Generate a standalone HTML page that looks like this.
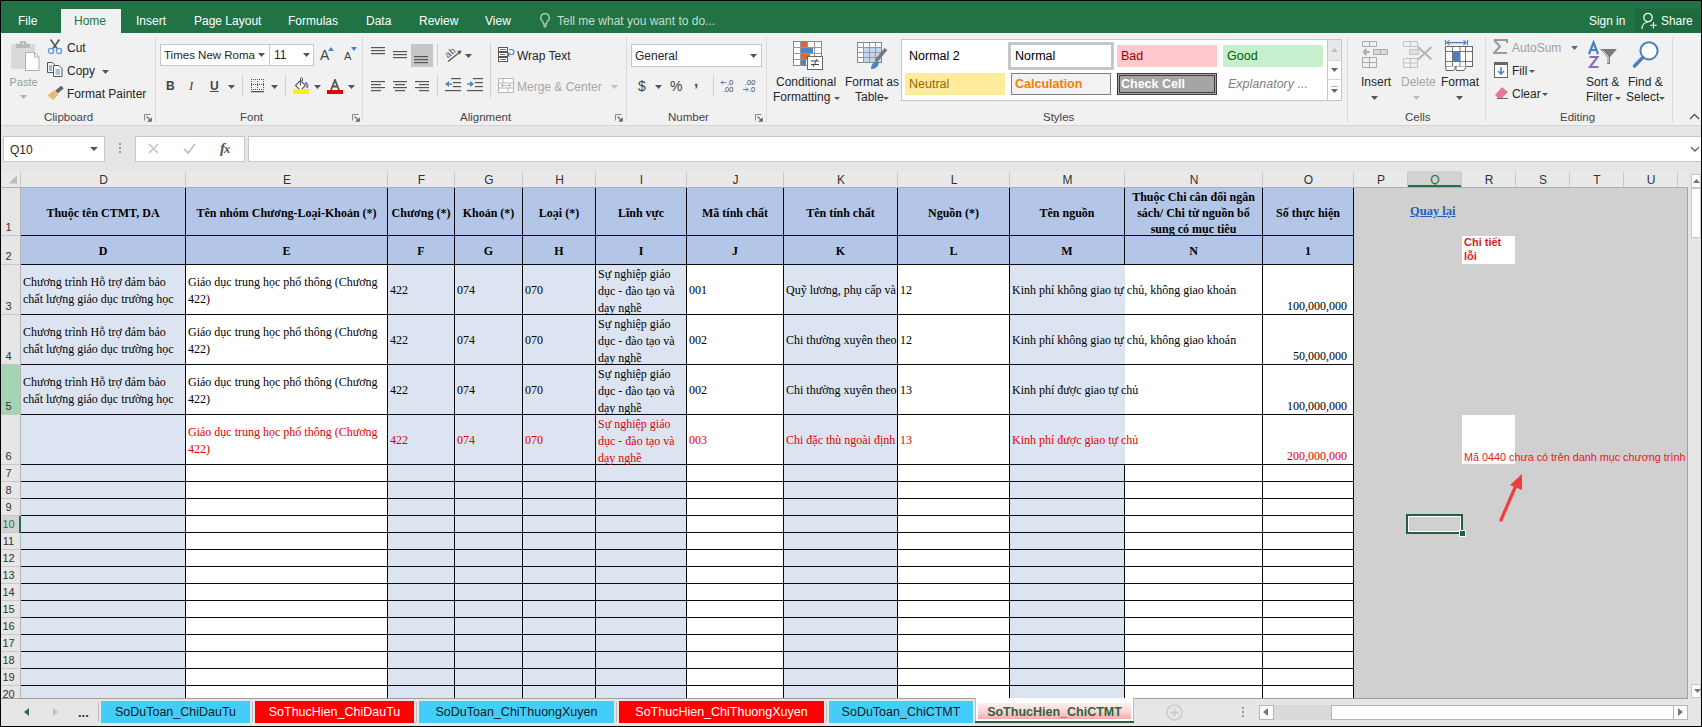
<!DOCTYPE html>
<html><head><meta charset="utf-8"><style>
html,body{margin:0;padding:0;width:1702px;height:727px;overflow:hidden;background:#000}
body{position:relative;font-family:'Liberation Sans', sans-serif}
div{position:absolute}
.t{white-space:nowrap}
</style></head><body>
<div style="left:0px;top:0px;width:1702px;height:727px;background:#000"></div>
<div style="left:1px;top:1px;width:1700px;height:32px;background:#217346"></div>
<div style="left:61px;top:9px;width:60px;height:25px;background:#f1f1f1"></div>
<div class="t" style="left:18px;top:14px;font-size:12px;color:#fff;line-height:15px">File</div>
<div class="t" style="left:74px;top:14px;font-size:12px;color:#217346;line-height:15px">Home</div>
<div class="t" style="left:136px;top:14px;font-size:12px;color:#fff;line-height:15px">Insert</div>
<div class="t" style="left:194px;top:14px;font-size:12px;color:#fff;line-height:15px">Page Layout</div>
<div class="t" style="left:288px;top:14px;font-size:12px;color:#fff;line-height:15px">Formulas</div>
<div class="t" style="left:366px;top:14px;font-size:12px;color:#fff;line-height:15px">Data</div>
<div class="t" style="left:419px;top:14px;font-size:12px;color:#fff;line-height:15px">Review</div>
<div class="t" style="left:485px;top:14px;font-size:12px;color:#fff;line-height:15px">View</div>
<svg style="position:absolute;left:539px;top:12px;" width="12" height="16" viewBox="0 0 12 16"><path d="M6 1.5a4.3 4.3 0 0 0-2.6 7.7c.6.5.9 1.2.9 2V12h3.4v-.8c0-.8.3-1.5.9-2A4.3 4.3 0 0 0 6 1.5z" fill="none" stroke="#c8dccf" stroke-width="1.1"/><path d="M4.3 13.5h3.4M4.8 15h2.4" stroke="#c8dccf" stroke-width="1.1"/></svg>
<div class="t" style="left:557px;top:14px;font-size:12px;color:#c8dccf;line-height:15px">Tell me what you want to do...</div>
<div class="t" style="left:1589px;top:13.5px;font-size:11.9px;color:#fff;line-height:15px">Sign in</div>
<div style="left:1635px;top:9px;width:66px;height:24px;background:#1e6b3f"></div>
<svg style="position:absolute;left:1641px;top:12px;" width="16" height="18" viewBox="0 0 16 18"><circle cx="7" cy="5.5" r="4.2" fill="none" stroke="#fff" stroke-width="1.2"/><path d="M1 17c0-4 2.5-6.5 5.5-6.5" fill="none" stroke="#fff" stroke-width="1.2"/><path d="M12.5 10v6.5M9.2 13.2h6.5" stroke="#fff" stroke-width="1.1"/></svg>
<div class="t" style="left:1661px;top:13.5px;font-size:11.9px;color:#fff;line-height:15px">Share</div>
<div style="left:1px;top:33px;width:1700px;height:92px;background:#f1f1f1"></div>
<div style="left:1px;top:125px;width:1700px;height:1px;background:#d5d5d5"></div>
<div style="left:155px;top:37px;width:1px;height:85px;background:#dadada"></div>
<div style="left:362px;top:37px;width:1px;height:85px;background:#dadada"></div>
<div style="left:626px;top:37px;width:1px;height:85px;background:#dadada"></div>
<div style="left:766px;top:37px;width:1px;height:85px;background:#dadada"></div>
<div style="left:1347px;top:37px;width:1px;height:85px;background:#dadada"></div>
<div style="left:1485px;top:37px;width:1px;height:85px;background:#dadada"></div>
<div style="left:1672px;top:37px;width:1px;height:85px;background:#dadada"></div>
<div class="t" style="left:44px;top:110px;font-size:11.5px;color:#444;line-height:14px">Clipboard</div>
<div class="t" style="left:240px;top:110px;font-size:11.5px;color:#444;line-height:14px">Font</div>
<div class="t" style="left:460px;top:110px;font-size:11.5px;color:#444;line-height:14px">Alignment</div>
<div class="t" style="left:668px;top:110px;font-size:11.5px;color:#444;line-height:14px">Number</div>
<div class="t" style="left:1043px;top:110px;font-size:11.5px;color:#444;line-height:14px">Styles</div>
<div class="t" style="left:1405px;top:110px;font-size:11.5px;color:#444;line-height:14px">Cells</div>
<div class="t" style="left:1560px;top:110px;font-size:11.5px;color:#444;line-height:14px">Editing</div>
<svg style="position:absolute;left:144px;top:114px;" width="8" height="8" viewBox="0 0 8 8"><path d="M0.5 6.5V0.5H6.5" stroke="#888" fill="none"/><path d="M2.5 2.5l3.5 3.5" stroke="#666" stroke-width="1.1"/><path d="M7.8 3.2v4.6H3.2z" fill="#666"/></svg>
<svg style="position:absolute;left:352px;top:114px;" width="8" height="8" viewBox="0 0 8 8"><path d="M0.5 6.5V0.5H6.5" stroke="#888" fill="none"/><path d="M2.5 2.5l3.5 3.5" stroke="#666" stroke-width="1.1"/><path d="M7.8 3.2v4.6H3.2z" fill="#666"/></svg>
<svg style="position:absolute;left:615px;top:114px;" width="8" height="8" viewBox="0 0 8 8"><path d="M0.5 6.5V0.5H6.5" stroke="#888" fill="none"/><path d="M2.5 2.5l3.5 3.5" stroke="#666" stroke-width="1.1"/><path d="M7.8 3.2v4.6H3.2z" fill="#666"/></svg>
<svg style="position:absolute;left:755px;top:114px;" width="8" height="8" viewBox="0 0 8 8"><path d="M0.5 6.5V0.5H6.5" stroke="#888" fill="none"/><path d="M2.5 2.5l3.5 3.5" stroke="#666" stroke-width="1.1"/><path d="M7.8 3.2v4.6H3.2z" fill="#666"/></svg>
<svg style="position:absolute;left:1689px;top:113px;" width="11" height="7" viewBox="0 0 11 7"><path d="M1 6l4.5-4.5L10 6" stroke="#555" stroke-width="1.4" fill="none"/></svg>
<svg style="position:absolute;left:10px;top:40px;" width="31" height="32" viewBox="0 0 31 32"><rect x="1.2" y="4.2" width="24" height="24.5" fill="#d9d9d9"/><rect x="6" y="3.7" width="14" height="4.3" fill="#b9b9b9"/><rect x="10" y="1" width="6.4" height="3.5" rx="1" fill="#b9b9b9"/><circle cx="13.2" cy="3.6" r="1" fill="#f1f1f1"/><path d="M15.5 12.5h9l4.5 4.5v13.5h-13.5z" fill="#fff" stroke="#b0b0b0"/><path d="M24.5 12.5v4.5h4.5" fill="none" stroke="#b0b0b0"/></svg>
<div class="t" style="left:9.5px;top:75px;font-size:11px;color:#9a9a9a;line-height:14px">Paste</div>
<svg style="position:absolute;left:20px;top:95px;" width="7" height="4" viewBox="0 0 7 4"><path d="M0 0h7L3.5 4z" fill="#b0b0b0"/></svg>
<svg style="position:absolute;left:47px;top:39px;" width="16" height="16" viewBox="0 0 16 16"><path d="M3.5 0.5L10 9.5M12.5 0.5L6 9.5" stroke="#555" stroke-width="1.6"/><circle cx="4" cy="12" r="2.6" fill="none" stroke="#5b9bd5" stroke-width="1.3"/><circle cx="12" cy="12" r="2.6" fill="none" stroke="#5b9bd5" stroke-width="1.3"/></svg>
<div class="t" style="left:67px;top:41px;font-size:12px;color:#262626;line-height:14px">Cut</div>
<svg style="position:absolute;left:47px;top:62px;" width="16" height="15" viewBox="0 0 16 15"><path d="M0.5 0.5h5l2 2v8h-7z" fill="#f1f1f1" stroke="#555"/><path d="M2 4h3M2 6h3M2 8h3" stroke="#4a86c5"/><path d="M6.5 3.5h5.5l3 3v8h-8.5z" fill="#fff" stroke="#555"/><path d="M8.5 8h4.5M8.5 10h4.5M8.5 12h4.5" stroke="#4a86c5"/></svg>
<div class="t" style="left:67px;top:64px;font-size:12px;color:#262626;line-height:14px">Copy</div>
<svg style="position:absolute;left:102px;top:70px;" width="7" height="4" viewBox="0 0 7 4"><path d="M0 0h7L3.5 4z" fill="#555"/></svg>
<svg style="position:absolute;left:47px;top:86px;" width="17" height="14" viewBox="0 0 17 14"><path d="M9.5 6L15.5 1" stroke="#666" stroke-width="3.6"/><path d="M0.5 9.5L7 4l4.5 4.5L6 14z" fill="#e4bd73"/></svg>
<div class="t" style="left:67px;top:87px;font-size:12px;color:#262626;line-height:14px">Format Painter</div>
<div style="left:160px;top:44px;width:110px;height:22px;background:#fff;border:1px solid #c6c6c6;box-sizing:border-box"></div>
<div style="left:269px;top:44px;width:45px;height:22px;background:#fff;border:1px solid #c6c6c6;box-sizing:border-box"></div>
<div class="t" style="left:164px;top:48px;font-size:11.5px;color:#262626;line-height:14px">Times New Roma</div>
<svg style="position:absolute;left:258px;top:53px;" width="7" height="4" viewBox="0 0 7 4"><path d="M0 0h7L3.5 4z" fill="#555"/></svg>
<div class="t" style="left:274px;top:48px;font-size:12px;color:#262626;line-height:14px">11</div>
<svg style="position:absolute;left:303px;top:53px;" width="7" height="4" viewBox="0 0 7 4"><path d="M0 0h7L3.5 4z" fill="#555"/></svg>
<div class="t" style="left:320px;top:47px;font-size:14px;color:#444;line-height:16px">A</div>
<svg style="position:absolute;left:328px;top:47px;" width="6" height="4" viewBox="0 0 6 4"><path d="M0 4h6L3 0z" fill="#4a86c5"/></svg>
<div class="t" style="left:344px;top:50px;font-size:11px;color:#444;line-height:13px">A</div>
<svg style="position:absolute;left:351px;top:47px;" width="6" height="4" viewBox="0 0 6 4"><path d="M0 0h6L3 4z" fill="#4a86c5"/></svg>
<div class="t" style="left:166px;top:79px;font-size:12px;font-weight:bold;color:#444;line-height:14px">B</div>
<div class="t" style="left:189px;top:79px;font-size:13px;font-style:italic;font-family:'Liberation Serif', serif;color:#444;line-height:14px">I</div>
<div class="t" style="left:210px;top:79px;font-size:12px;font-weight:bold;color:#444;line-height:14px;text-decoration:underline">U</div>
<svg style="position:absolute;left:228px;top:85px;" width="7" height="4" viewBox="0 0 7 4"><path d="M0 0h7L3.5 4z" fill="#555"/></svg>
<svg style="position:absolute;left:271px;top:85px;" width="7" height="4" viewBox="0 0 7 4"><path d="M0 0h7L3.5 4z" fill="#555"/></svg>
<svg style="position:absolute;left:314px;top:85px;" width="7" height="4" viewBox="0 0 7 4"><path d="M0 0h7L3.5 4z" fill="#555"/></svg>
<svg style="position:absolute;left:348px;top:85px;" width="7" height="4" viewBox="0 0 7 4"><path d="M0 0h7L3.5 4z" fill="#555"/></svg>
<div style="left:242px;top:75px;width:1px;height:21px;background:#d0d0d0"></div>
<div style="left:285px;top:75px;width:1px;height:21px;background:#d0d0d0"></div>
<svg style="position:absolute;left:250px;top:78px;" width="16" height="15" viewBox="0 0 16 15"><g fill="#555"><rect x="1" y="1" width="1" height="1"/><rect x="1" y="3" width="1" height="1"/><rect x="1" y="5" width="1" height="1"/><rect x="1" y="7" width="1" height="1"/><rect x="1" y="9" width="1" height="1"/><rect x="1" y="11" width="1" height="1"/><rect x="3" y="1" width="1" height="1"/><rect x="3" y="11" width="1" height="1"/><rect x="5" y="1" width="1" height="1"/><rect x="5" y="11" width="1" height="1"/><rect x="7" y="1" width="1" height="1"/><rect x="7" y="3" width="1" height="1"/><rect x="7" y="5" width="1" height="1"/><rect x="7" y="7" width="1" height="1"/><rect x="7" y="9" width="1" height="1"/><rect x="7" y="11" width="1" height="1"/><rect x="9" y="1" width="1" height="1"/><rect x="9" y="11" width="1" height="1"/><rect x="11" y="1" width="1" height="1"/><rect x="11" y="11" width="1" height="1"/><rect x="13" y="1" width="1" height="1"/><rect x="13" y="3" width="1" height="1"/><rect x="13" y="5" width="1" height="1"/><rect x="13" y="7" width="1" height="1"/><rect x="13" y="9" width="1" height="1"/><rect x="13" y="11" width="1" height="1"/><rect x="1" y="6" width="1" height="1"/><rect x="3" y="6" width="1" height="1"/><rect x="5" y="6" width="1" height="1"/><rect x="7" y="6" width="1" height="1"/><rect x="9" y="6" width="1" height="1"/><rect x="11" y="6" width="1" height="1"/><rect x="13" y="6" width="1" height="1"/></g><rect x="1" y="13" width="13" height="1.3" fill="#555"/></svg>
<svg style="position:absolute;left:292px;top:77px;" width="18" height="18" viewBox="0 0 18 18"><path d="M3.5 8.5l5-5 5 5-5 5z" fill="#fff" stroke="#555" stroke-width="1.1"/><path d="M8.5 8.5V1.5c0-1 2-1 2 0v2.5" fill="none" stroke="#555"/><path d="M13 6c2.5 0 3 2.5 2 5" stroke="#4a86c5" stroke-width="1.8" fill="none"/><rect x="1" y="12" width="16" height="5" fill="#f5f500"/></svg>
<svg style="position:absolute;left:326px;top:79px;" width="18" height="16" viewBox="0 0 18 16"><path d="M5 11L9 1l4 10M6.5 7.5h5" stroke="#555" stroke-width="1.8" fill="none"/><rect x="1" y="11" width="16" height="4" fill="#e00000"/></svg>
<div style="left:411px;top:44px;width:22px;height:23px;background:#c6c6c6"></div>
<svg style="position:absolute;left:371px;top:47px;" width="14" height="10" viewBox="0 0 14 10"><rect x="0" y="0" width="14" height="1.2" fill="#555"/><rect x="0" y="3" width="14" height="1.2" fill="#555"/><rect x="0" y="6" width="14" height="1.2" fill="#555"/></svg>
<svg style="position:absolute;left:393px;top:51px;" width="14" height="10" viewBox="0 0 14 10"><rect x="0" y="0" width="14" height="1.2" fill="#555"/><rect x="0" y="3" width="14" height="1.2" fill="#555"/><rect x="0" y="6" width="14" height="1.2" fill="#555"/></svg>
<svg style="position:absolute;left:414px;top:56px;" width="14" height="10" viewBox="0 0 14 10"><rect x="0" y="0" width="14" height="1.2" fill="#555"/><rect x="0" y="3" width="14" height="1.2" fill="#555"/><rect x="0" y="6" width="14" height="1.2" fill="#555"/></svg>
<svg style="position:absolute;left:371px;top:81px;" width="14" height="13" viewBox="0 0 14 13"><rect x="0" y="0" width="14" height="1.2" fill="#555"/><rect x="0" y="3" width="10" height="1.2" fill="#555"/><rect x="0" y="6" width="14" height="1.2" fill="#555"/><rect x="0" y="9" width="10" height="1.2" fill="#555"/></svg>
<svg style="position:absolute;left:393px;top:81px;" width="14" height="13" viewBox="0 0 14 13"><rect x="0" y="0" width="14" height="1.2" fill="#555"/><rect x="2" y="3" width="10" height="1.2" fill="#555"/><rect x="0" y="6" width="14" height="1.2" fill="#555"/><rect x="2" y="9" width="10" height="1.2" fill="#555"/></svg>
<svg style="position:absolute;left:415px;top:81px;" width="14" height="13" viewBox="0 0 14 13"><rect x="0" y="0" width="14" height="1.2" fill="#555"/><rect x="4" y="3" width="10" height="1.2" fill="#555"/><rect x="0" y="6" width="14" height="1.2" fill="#555"/><rect x="4" y="9" width="10" height="1.2" fill="#555"/></svg>
<div style="left:437px;top:44px;width:1px;height:21px;background:#d0d0d0"></div>
<div style="left:437px;top:75px;width:1px;height:21px;background:#d0d0d0"></div>
<svg style="position:absolute;left:444px;top:46px;" width="19" height="17" viewBox="0 0 19 17"><text x="1" y="10" font-size="9.5" font-family="Liberation Sans" fill="#555" transform="rotate(-40 6 7)">ab</text><path d="M4 15.5L16 6" stroke="#555" stroke-width="1.3"/><path d="M17.5 4.5l-4.5 0.5 3 3.5z" fill="#555"/></svg>
<svg style="position:absolute;left:465px;top:54px;" width="7" height="4" viewBox="0 0 7 4"><path d="M0 0h7L3.5 4z" fill="#555"/></svg>
<svg style="position:absolute;left:445px;top:78px;" width="17" height="14" viewBox="0 0 17 14"><rect x="6" y="0" width="10" height="1.2" fill="#555"/><rect x="8" y="4" width="8" height="1.2" fill="#555"/><rect x="8" y="8" width="8" height="1.2" fill="#555"/><rect x="0" y="12" width="16" height="1.2" fill="#555"/><path d="M0 6l4-3v6z" fill="#4a86c5"/><rect x="3" y="5.4" width="4" height="1.4" fill="#4a86c5"/></svg>
<svg style="position:absolute;left:467px;top:78px;" width="17" height="14" viewBox="0 0 17 14"><rect x="6" y="0" width="10" height="1.2" fill="#555"/><rect x="8" y="4" width="8" height="1.2" fill="#555"/><rect x="8" y="8" width="8" height="1.2" fill="#555"/><rect x="0" y="12" width="16" height="1.2" fill="#555"/><path d="M7 6l-4-3v6z" fill="#4a86c5"/><rect x="0" y="5.4" width="4" height="1.4" fill="#4a86c5"/></svg>
<div style="left:490px;top:43px;width:1px;height:55px;background:#d0d0d0"></div>
<svg style="position:absolute;left:498px;top:47px;" width="17" height="16" viewBox="0 0 17 16"><g fill="#fff" stroke="#555"><rect x="0.5" y="0.5" width="9" height="4"/><rect x="0.5" y="5.5" width="9" height="4"/><rect x="0.5" y="10.5" width="9" height="4"/></g><path d="M2 2.5h6M2 7.5h5M2 12.5h6" stroke="#777"/><path d="M11 2.5h2.5a2.5 2.5 0 0 1 0 5H10M11.5 5.5l-2 2 2 2" stroke="#4a86c5" stroke-width="1.2" fill="none"/></svg>
<div class="t" style="left:517px;top:49px;font-size:12px;color:#262626;line-height:14px">Wrap Text</div>
<svg style="position:absolute;left:498px;top:78px;" width="16" height="15" viewBox="0 0 16 15"><path d="M0.5 0.5h15v14h-15zM0.5 5h15M0.5 10h15M5 0v5M10 10v5" stroke="#b5b5b5" fill="#fff"/><path d="M3 7.5h10M3 7.5l2-1.5M3 7.5l2 1.5M13 7.5l-2-1.5M13 7.5l-2 1.5" stroke="#b5b5b5"/></svg>
<div class="t" style="left:517px;top:80px;font-size:12px;color:#a6a6a6;line-height:14px">Merge &amp; Center</div>
<svg style="position:absolute;left:611px;top:85px;" width="7" height="4" viewBox="0 0 7 4"><path d="M0 0h7L3.5 4z" fill="#c0c0c0"/></svg>
<div style="left:631px;top:44px;width:131px;height:23px;background:#fff;border:1px solid #c6c6c6;box-sizing:border-box"></div>
<div class="t" style="left:635px;top:49px;font-size:12px;color:#262626;line-height:14px">General</div>
<svg style="position:absolute;left:750px;top:54px;" width="7" height="4" viewBox="0 0 7 4"><path d="M0 0h7L3.5 4z" fill="#555"/></svg>
<div class="t" style="left:638px;top:78px;font-size:14px;color:#444;line-height:16px">$</div>
<svg style="position:absolute;left:655px;top:85px;" width="7" height="4" viewBox="0 0 7 4"><path d="M0 0h7L3.5 4z" fill="#555"/></svg>
<div class="t" style="left:670px;top:78px;font-size:14px;color:#444;line-height:16px">%</div>
<div class="t" style="left:694px;top:73px;font-size:15px;font-weight:bold;color:#444;line-height:16px">,</div>
<div style="left:713px;top:75px;width:1px;height:21px;background:#d0d0d0"></div>
<svg style="position:absolute;left:720px;top:79px;" width="16" height="14" viewBox="0 0 16 14"><text x="7" y="6" font-size="7.5" font-family="Liberation Sans" fill="#444">.0</text><text x="3" y="13" font-size="7.5" font-family="Liberation Sans" fill="#444">.00</text><path d="M1 3.5h5M1 3.5l2-2M1 3.5l2 2" stroke="#4a86c5" fill="none"/></svg>
<svg style="position:absolute;left:742px;top:79px;" width="16" height="14" viewBox="0 0 16 14"><text x="3" y="6" font-size="7.5" font-family="Liberation Sans" fill="#444">.00</text><text x="7" y="13" font-size="7.5" font-family="Liberation Sans" fill="#444">.0</text><path d="M1 10.5h5M6 10.5l-2-2M6 10.5l-2 2" stroke="#4a86c5" fill="none"/></svg>
<svg style="position:absolute;left:793px;top:41px;" width="31" height="30" viewBox="0 0 31 30"><g stroke="#888" fill="#fff"><rect x="0.5" y="0.5" width="28" height="24"/></g><path d="M0.5 6.5h28M0.5 12.5h28M0.5 18.5h28M7.5 0.5v24M14.5 0.5v24M21.5 0.5v24" stroke="#999"/><rect x="8" y="1" width="6" height="5" fill="#e0633a"/><rect x="8" y="7" width="12" height="5" fill="#4a86c5"/><rect x="8" y="13" width="9" height="5" fill="#e0633a"/><rect x="8" y="19" width="5" height="5" fill="#4a86c5"/><rect x="14.5" y="15.5" width="15" height="13" fill="#fff" stroke="#666"/><path d="M18 20h8M18 23.5h8M24 18l-4 8" stroke="#444"/></svg>
<div class="t" style="left:776px;top:75px;font-size:12px;color:#262626;line-height:14px">Conditional</div>
<div class="t" style="left:773px;top:90px;font-size:12px;color:#262626;line-height:14px">Formatting</div>
<svg style="position:absolute;left:834px;top:97px;" width="6" height="3" viewBox="0 0 6 3"><path d="M0 0h6L3 3z" fill="#555"/></svg>
<svg style="position:absolute;left:857px;top:42px;" width="31" height="29" viewBox="0 0 31 29"><rect x="0.5" y="0.5" width="24" height="20" fill="#fff" stroke="#888"/><rect x="6" y="6" width="18" height="14" fill="#c5d7ea"/><path d="M0.5 5.5h24M0.5 10.5h24M0.5 15.5h24M6.5 0.5v20M12.5 0.5v20M18.5 0.5v20" stroke="#999"/><path d="M29 7l-10 12" stroke="#777" stroke-width="3.5"/><path d="M14 27c0-4 2-7 6-8l2 2c-1 4-4 6-8 6z" fill="#4a86c5"/></svg>
<div class="t" style="left:845px;top:75px;font-size:12px;color:#262626;line-height:14px">Format as</div>
<div class="t" style="left:855px;top:90px;font-size:12px;color:#262626;line-height:14px">Table</div>
<svg style="position:absolute;left:883px;top:97px;" width="6" height="3" viewBox="0 0 6 3"><path d="M0 0h6L3 3z" fill="#555"/></svg>
<div style="left:901px;top:39px;width:427px;height:62px;background:#fff;border:1px solid #c6c6c6;box-sizing:border-box"></div>
<div class="t" style="left:909px;top:49px;font-size:12.5px;color:#000;line-height:14px">Normal 2</div>
<div style="left:1008px;top:42px;width:106px;height:28px;background:#fff;border:3px solid #c6c6c6;box-sizing:border-box"></div>
<div class="t" style="left:1015px;top:49px;font-size:12.5px;color:#000;line-height:14px">Normal</div>
<div style="left:1117px;top:45px;width:100px;height:22px;background:#ffc7ce"></div>
<div class="t" style="left:1121px;top:49px;font-size:12.5px;color:#9c0006;line-height:14px">Bad</div>
<div style="left:1223px;top:45px;width:100px;height:22px;background:#c6efce"></div>
<div class="t" style="left:1227px;top:49px;font-size:12.5px;color:#006100;line-height:14px">Good</div>
<div style="left:905px;top:73px;width:100px;height:22px;background:#ffeb9c"></div>
<div class="t" style="left:909px;top:77px;font-size:12.5px;color:#9c6500;line-height:14px">Neutral</div>
<div style="left:1011px;top:73px;width:100px;height:22px;background:#f2f2f2;border:1px solid #7f7f7f;box-sizing:border-box"></div>
<div class="t" style="left:1015px;top:77px;font-size:12.5px;color:#fa7d00;font-weight:bold;line-height:14px">Calculation</div>
<div style="left:1117px;top:73px;width:100px;height:22px;background:#a5a5a5;border:3px double #3f3f3f;box-sizing:border-box"></div>
<div class="t" style="left:1121px;top:77px;font-size:12.5px;color:#fff;font-weight:bold;line-height:14px">Check Cell</div>
<div class="t" style="left:1228px;top:77px;font-size:12.5px;color:#7f7f7f;font-style:italic;line-height:14px">Explanatory ...</div>
<div style="left:1327px;top:39px;width:15px;height:62px;background:#fff;border:1px solid #c6c6c6;box-sizing:border-box"></div>
<div style="left:1328px;top:40px;width:13px;height:20px;background:#e9e9e9"></div>
<div style="left:1327px;top:60px;width:15px;height:1px;background:#d6d6d6"></div>
<div style="left:1327px;top:79px;width:15px;height:1px;background:#d6d6d6"></div>
<svg style="position:absolute;left:1331px;top:48px;" width="7" height="4" viewBox="0 0 7 4"><path d="M0 4h7L3.5 0z" fill="#c0c0c0"/></svg>
<svg style="position:absolute;left:1331px;top:68px;" width="7" height="4" viewBox="0 0 7 4"><path d="M0 0h7L3.5 4z" fill="#666"/></svg>
<svg style="position:absolute;left:1331px;top:86px;" width="7" height="7" viewBox="0 0 7 7"><path d="M0 0h7" stroke="#666"/><path d="M0 3h7L3.5 7z" fill="#666"/></svg>
<svg style="position:absolute;left:1361px;top:40px;" width="28" height="29" viewBox="0 0 28 29"><g fill="none" stroke="#aaa"><path d="M1.5 1.5h14v5h-14zM8.5 1.5v5"/><path d="M1.5 17.5h14v10h-14zM1.5 22.5h14M8.5 17.5v10"/></g><path d="M12.5 9.5h14v5h-14zM19.5 9.5v5" fill="#dadada" stroke="#aaa"/><path d="M2.5 12h6M2.5 12l3-3M2.5 12l3 3" stroke="#aaa" stroke-width="1.8" fill="none"/></svg>
<div class="t" style="left:1361px;top:75px;font-size:12px;color:#262626;line-height:14px">Insert</div>
<svg style="position:absolute;left:1371px;top:96px;" width="7" height="4" viewBox="0 0 7 4"><path d="M0 0h7L3.5 4z" fill="#555"/></svg>
<svg style="position:absolute;left:1402px;top:40px;" width="31" height="29" viewBox="0 0 31 29"><g fill="none" stroke="#c2c2c2"><path d="M1.5 1.5h14v5h-14zM8.5 1.5v5"/><path d="M1.5 18.5h14v9h-14zM1.5 23h14M8.5 18.5v9"/></g><path d="M7.5 9.5h9v5h-9z" fill="#dedede" stroke="#c2c2c2"/><path d="M16 7L29.5 19.5M29.5 7L16 19.5" stroke="#b4b4b4" stroke-width="2"/></svg>
<div class="t" style="left:1401px;top:75px;font-size:12px;color:#a6a6a6;line-height:14px">Delete</div>
<svg style="position:absolute;left:1413px;top:96px;" width="7" height="4" viewBox="0 0 7 4"><path d="M0 0h7L3.5 4z" fill="#bbb"/></svg>
<svg style="position:absolute;left:1444px;top:40px;" width="30" height="32" viewBox="0 0 30 32"><path d="M1.5 0v5M23.5 0v5M2.5 2.6h20M2.5 2.6l3-2.2M2.5 2.6l3 2.2M22.5 2.6l-3-2.2M22.5 2.6l-3 2.2" stroke="#4a7fbf" stroke-width="1.1" fill="none"/><rect x="1.5" y="6.5" width="27" height="20" fill="#fff" stroke="#666"/><path d="M1.5 11.5h27M1.5 21.5h27M8.5 6.5v20M16 6.5v20M21.5 6.5v20" stroke="#777"/><rect x="9" y="12" width="7" height="9.5" fill="#4a7fbf"/><path d="M2 26.5v4h7.5l2.5-4M12 26.5v4h8l2.5-4" stroke="#666" fill="#fff"/></svg>
<div class="t" style="left:1441px;top:75px;font-size:12px;color:#262626;line-height:14px">Format</div>
<svg style="position:absolute;left:1456px;top:96px;" width="7" height="4" viewBox="0 0 7 4"><path d="M0 0h7L3.5 4z" fill="#555"/></svg>
<svg style="position:absolute;left:1493px;top:39px;" width="15" height="15" viewBox="0 0 15 15"><path d="M1 1h13v3M14 14H1l6-6.5L1 1" fill="none" stroke="#9a9a9a" stroke-width="2"/></svg>
<div class="t" style="left:1512px;top:41px;font-size:12px;color:#a0a0a0;line-height:14px">AutoSum</div>
<svg style="position:absolute;left:1571px;top:46px;" width="7" height="4" viewBox="0 0 7 4"><path d="M0 0h7L3.5 4z" fill="#666"/></svg>
<svg style="position:absolute;left:1494px;top:62px;" width="14" height="16" viewBox="0 0 14 16"><rect x="0.5" y="0.5" width="13" height="15" fill="#fff" stroke="#666"/><rect x="0" y="0" width="14" height="3" fill="#666"/><path d="M7 5v7M4 9l3 3 3-3" stroke="#4a86c5" stroke-width="1.6" fill="none"/></svg>
<div class="t" style="left:1512px;top:64px;font-size:12px;color:#262626;line-height:14px">Fill</div>
<svg style="position:absolute;left:1529px;top:70px;" width="6" height="3" viewBox="0 0 6 3"><path d="M0 0h6L3 3z" fill="#555"/></svg>
<svg style="position:absolute;left:1494px;top:86px;" width="15" height="13" viewBox="0 0 15 13"><path d="M1 9l7-8 6 5-6 6H4z" fill="#e8779a"/><path d="M3 12.5h11" stroke="#666"/></svg>
<div class="t" style="left:1512px;top:87px;font-size:12px;color:#262626;line-height:14px">Clear</div>
<svg style="position:absolute;left:1542px;top:93px;" width="6" height="3" viewBox="0 0 6 3"><path d="M0 0h6L3 3z" fill="#555"/></svg>
<svg style="position:absolute;left:1586px;top:40px;" width="34" height="30" viewBox="0 0 34 30"><path d="M3 14L7.5 2.5L12 14M4.8 10h5.4" stroke="#4a7fbf" stroke-width="2.2" fill="none"/><path d="M3.5 17h8L4 27h8.5" stroke="#8e6bb8" stroke-width="2.1" fill="none"/><path d="M14 9h17l-7 8v7h-3v-7z" fill="#7a7a7a"/><path d="M16.5 10.5l5.5 6v6.5" stroke="#fff" stroke-width="1" fill="none"/></svg>
<div class="t" style="left:1586px;top:75px;font-size:12px;color:#262626;line-height:14px">Sort &amp;</div>
<div class="t" style="left:1586px;top:90px;font-size:12px;color:#262626;line-height:14px">Filter</div>
<svg style="position:absolute;left:1615px;top:97px;" width="6" height="3" viewBox="0 0 6 3"><path d="M0 0h6L3 3z" fill="#555"/></svg>
<svg style="position:absolute;left:1630px;top:38px;" width="31" height="31" viewBox="0 0 31 31"><circle cx="19" cy="12.8" r="8.6" fill="#fff" stroke="#4a7fbf" stroke-width="2"/><path d="M12.8 19.5L4.5 28" stroke="#4a7fbf" stroke-width="3.4" stroke-linecap="round"/></svg>
<div class="t" style="left:1628px;top:75px;font-size:12px;color:#262626;line-height:14px">Find &amp;</div>
<div class="t" style="left:1626px;top:90px;font-size:12px;color:#262626;line-height:14px">Select</div>
<svg style="position:absolute;left:1659px;top:97px;" width="6" height="3" viewBox="0 0 6 3"><path d="M0 0h6L3 3z" fill="#555"/></svg>
<div style="left:1px;top:126px;width:1700px;height:45px;background:#e6e6e6"></div>
<div style="left:3px;top:136px;width:102px;height:26px;background:#fff;border:1px solid #c6c6c6;box-sizing:border-box"></div>
<div class="t" style="left:10px;top:143px;font-size:12px;color:#262626;line-height:14px">Q10</div>
<svg style="position:absolute;left:90px;top:147px;" width="8" height="4" viewBox="0 0 8 4"><path d="M0 0h8L4 4z" fill="#555"/></svg>
<div style="left:119px;top:143px;width:2px;height:2px;background:#9a9a9a"></div>
<div style="left:119px;top:147px;width:2px;height:2px;background:#9a9a9a"></div>
<div style="left:119px;top:151px;width:2px;height:2px;background:#9a9a9a"></div>
<div style="left:135px;top:136px;width:110px;height:26px;background:#fff;border:1px solid #c6c6c6;box-sizing:border-box"></div>
<svg style="position:absolute;left:148px;top:143px;" width="11" height="11" viewBox="0 0 11 11"><path d="M1 1l9 9M10 1L1 10" stroke="#c4c4c4" stroke-width="1.6"/></svg>
<svg style="position:absolute;left:183px;top:143px;" width="13" height="11" viewBox="0 0 13 11"><path d="M1 6l4 4 7-9" stroke="#c6c6c6" stroke-width="2" fill="none"/></svg>
<div class="t" style="left:220px;top:140px;font-family:'Liberation Serif', serif;font-size:15px;color:#555;line-height:16px;font-weight:bold"><i>f</i><i style='font-size:12.5px;margin-left:-1px'>x</i></div>
<div style="left:248px;top:136px;width:1453px;height:26px;background:#fff;border:1px solid #c6c6c6;border-right:none;box-sizing:border-box"></div>
<svg style="position:absolute;left:1690px;top:146px;" width="10" height="6" viewBox="0 0 10 6"><path d="M1 1l4 4 4-4" stroke="#666" stroke-width="1.4" fill="none"/></svg>
<div style="left:1px;top:171px;width:1700px;height:16px;background:#e9e9e9"></div>
<div style="left:1px;top:187px;width:20px;height:511px;background:#e6e6e6"></div>
<svg style="position:absolute;left:8px;top:175px;" width="10" height="9" viewBox="0 0 10 9"><path d="M9 0.5v8H0.5z" fill="#bdbdbd"/></svg>
<div style="left:1408px;top:171px;width:53px;height:16px;background:#d2d2d2"></div>
<div style="left:1408px;top:185px;width:53px;height:2px;background:#217346"></div>
<div style="left:185px;top:172px;width:1px;height:15px;background:#c8c8c8"></div>
<div class="t" style="left:20px;top:173px;width:167px;text-align:center;font-size:12px;line-height:15px;color:#333">D</div>
<div style="left:387px;top:172px;width:1px;height:15px;background:#c8c8c8"></div>
<div class="t" style="left:185px;top:173px;width:204px;text-align:center;font-size:12px;line-height:15px;color:#333">E</div>
<div style="left:454px;top:172px;width:1px;height:15px;background:#c8c8c8"></div>
<div class="t" style="left:387px;top:173px;width:69px;text-align:center;font-size:12px;line-height:15px;color:#333">F</div>
<div style="left:522px;top:172px;width:1px;height:15px;background:#c8c8c8"></div>
<div class="t" style="left:454px;top:173px;width:70px;text-align:center;font-size:12px;line-height:15px;color:#333">G</div>
<div style="left:595px;top:172px;width:1px;height:15px;background:#c8c8c8"></div>
<div class="t" style="left:522px;top:173px;width:75px;text-align:center;font-size:12px;line-height:15px;color:#333">H</div>
<div style="left:686px;top:172px;width:1px;height:15px;background:#c8c8c8"></div>
<div class="t" style="left:595px;top:173px;width:93px;text-align:center;font-size:12px;line-height:15px;color:#333">I</div>
<div style="left:783px;top:172px;width:1px;height:15px;background:#c8c8c8"></div>
<div class="t" style="left:686px;top:173px;width:99px;text-align:center;font-size:12px;line-height:15px;color:#333">J</div>
<div style="left:897px;top:172px;width:1px;height:15px;background:#c8c8c8"></div>
<div class="t" style="left:783px;top:173px;width:116px;text-align:center;font-size:12px;line-height:15px;color:#333">K</div>
<div style="left:1009px;top:172px;width:1px;height:15px;background:#c8c8c8"></div>
<div class="t" style="left:897px;top:173px;width:114px;text-align:center;font-size:12px;line-height:15px;color:#333">L</div>
<div style="left:1124px;top:172px;width:1px;height:15px;background:#c8c8c8"></div>
<div class="t" style="left:1009px;top:173px;width:117px;text-align:center;font-size:12px;line-height:15px;color:#333">M</div>
<div style="left:1262px;top:172px;width:1px;height:15px;background:#c8c8c8"></div>
<div class="t" style="left:1124px;top:173px;width:140px;text-align:center;font-size:12px;line-height:15px;color:#333">N</div>
<div style="left:1353px;top:172px;width:1px;height:15px;background:#c8c8c8"></div>
<div class="t" style="left:1262px;top:173px;width:93px;text-align:center;font-size:12px;line-height:15px;color:#333">O</div>
<div style="left:1407px;top:172px;width:1px;height:15px;background:#c8c8c8"></div>
<div class="t" style="left:1353px;top:173px;width:56px;text-align:center;font-size:12px;line-height:15px;color:#333">P</div>
<div style="left:1461px;top:172px;width:1px;height:15px;background:#c8c8c8"></div>
<div class="t" style="left:1407px;top:173px;width:56px;text-align:center;font-size:12px;line-height:15px;color:#217346">Q</div>
<div style="left:1515px;top:172px;width:1px;height:15px;background:#c8c8c8"></div>
<div class="t" style="left:1461px;top:173px;width:56px;text-align:center;font-size:12px;line-height:15px;color:#333">R</div>
<div style="left:1569px;top:172px;width:1px;height:15px;background:#c8c8c8"></div>
<div class="t" style="left:1515px;top:173px;width:56px;text-align:center;font-size:12px;line-height:15px;color:#333">S</div>
<div style="left:1623px;top:172px;width:1px;height:15px;background:#c8c8c8"></div>
<div class="t" style="left:1569px;top:173px;width:56px;text-align:center;font-size:12px;line-height:15px;color:#333">T</div>
<div style="left:1677px;top:172px;width:1px;height:15px;background:#c8c8c8"></div>
<div class="t" style="left:1623px;top:173px;width:56px;text-align:center;font-size:12px;line-height:15px;color:#333">U</div>
<div style="left:20px;top:172px;width:1px;height:15px;background:#c8c8c8"></div>
<div style="left:1px;top:187px;width:1687px;height:1px;background:#a9b0b3"></div>
<div style="left:1691px;top:187px;width:0px;height:0px;"></div>
<div style="left:21px;top:188px;width:1332px;height:510px;background:#fff"></div>
<div style="left:21px;top:264px;width:165px;height:434px;background:#dce4f1"></div>
<div style="left:388px;top:264px;width:67px;height:434px;background:#dce4f1"></div>
<div style="left:455px;top:264px;width:68px;height:434px;background:#dce4f1"></div>
<div style="left:523px;top:264px;width:73px;height:434px;background:#dce4f1"></div>
<div style="left:596px;top:264px;width:91px;height:434px;background:#dce4f1"></div>
<div style="left:784px;top:264px;width:114px;height:434px;background:#dce4f1"></div>
<div style="left:1010px;top:264px;width:115px;height:434px;background:#dce4f1"></div>
<div style="left:21px;top:188px;width:1332px;height:76px;background:#b4c6e7"></div>
<div style="left:1354px;top:188px;width:334px;height:510px;background:#d0d0d0"></div>
<div style="left:1687px;top:188px;width:1px;height:510px;background:#9e9e9e"></div>
<div style="left:21px;top:235px;width:1333px;height:1px;background:#0a0a0a"></div>
<div style="left:21px;top:264px;width:1333px;height:1px;background:#0a0a0a"></div>
<div style="left:21px;top:314px;width:1333px;height:1px;background:#0a0a0a"></div>
<div style="left:21px;top:364px;width:1333px;height:1px;background:#0a0a0a"></div>
<div style="left:21px;top:414px;width:1333px;height:1px;background:#0a0a0a"></div>
<div style="left:21px;top:464px;width:1333px;height:1px;background:#0a0a0a"></div>
<div style="left:21px;top:481px;width:1333px;height:1px;background:#0a0a0a"></div>
<div style="left:21px;top:498px;width:1333px;height:1px;background:#0a0a0a"></div>
<div style="left:21px;top:515px;width:1333px;height:1px;background:#0a0a0a"></div>
<div style="left:21px;top:532px;width:1333px;height:1px;background:#0a0a0a"></div>
<div style="left:21px;top:549px;width:1333px;height:1px;background:#0a0a0a"></div>
<div style="left:21px;top:566px;width:1333px;height:1px;background:#0a0a0a"></div>
<div style="left:21px;top:583px;width:1333px;height:1px;background:#0a0a0a"></div>
<div style="left:21px;top:600px;width:1333px;height:1px;background:#0a0a0a"></div>
<div style="left:21px;top:617px;width:1333px;height:1px;background:#0a0a0a"></div>
<div style="left:21px;top:634px;width:1333px;height:1px;background:#0a0a0a"></div>
<div style="left:21px;top:651px;width:1333px;height:1px;background:#0a0a0a"></div>
<div style="left:21px;top:668px;width:1333px;height:1px;background:#0a0a0a"></div>
<div style="left:21px;top:685px;width:1333px;height:1px;background:#0a0a0a"></div>
<div style="left:185px;top:188px;width:1px;height:510px;background:#0a0a0a"></div>
<div style="left:387px;top:188px;width:1px;height:510px;background:#0a0a0a"></div>
<div style="left:454px;top:188px;width:1px;height:510px;background:#0a0a0a"></div>
<div style="left:522px;top:188px;width:1px;height:510px;background:#0a0a0a"></div>
<div style="left:595px;top:188px;width:1px;height:510px;background:#0a0a0a"></div>
<div style="left:686px;top:188px;width:1px;height:510px;background:#0a0a0a"></div>
<div style="left:783px;top:188px;width:1px;height:510px;background:#0a0a0a"></div>
<div style="left:897px;top:188px;width:1px;height:510px;background:#0a0a0a"></div>
<div style="left:1009px;top:188px;width:1px;height:510px;background:#0a0a0a"></div>
<div style="left:1124px;top:188px;width:1px;height:76px;background:#0a0a0a"></div>
<div style="left:1124px;top:464px;width:1px;height:234px;background:#0a0a0a"></div>
<div style="left:1262px;top:188px;width:1px;height:510px;background:#0a0a0a"></div>
<div style="left:1353px;top:188px;width:1px;height:510px;background:#0a0a0a"></div>
<div style="left:1px;top:235px;width:20px;height:1px;background:#c8c8c8"></div>
<div class="t" style="left:-1px;width:19px;text-align:center;top:220px;font-size:11px;line-height:15px;color:#333">1</div>
<div style="left:1px;top:264px;width:20px;height:1px;background:#c8c8c8"></div>
<div class="t" style="left:-1px;width:19px;text-align:center;top:249px;font-size:11px;line-height:15px;color:#333">2</div>
<div style="left:1px;top:314px;width:20px;height:1px;background:#c8c8c8"></div>
<div class="t" style="left:-1px;width:19px;text-align:center;top:299px;font-size:11px;line-height:15px;color:#333">3</div>
<div style="left:1px;top:364px;width:20px;height:1px;background:#c8c8c8"></div>
<div class="t" style="left:-1px;width:19px;text-align:center;top:349px;font-size:11px;line-height:15px;color:#333">4</div>
<div style="left:1px;top:365px;width:19px;height:49px;background:#a3d5b4"></div>
<div style="left:1px;top:414px;width:20px;height:1px;background:#c8c8c8"></div>
<div class="t" style="left:-1px;width:19px;text-align:center;top:399px;font-size:11px;line-height:15px;color:#333">5</div>
<div style="left:1px;top:464px;width:20px;height:1px;background:#c8c8c8"></div>
<div class="t" style="left:-1px;width:19px;text-align:center;top:449px;font-size:11px;line-height:15px;color:#333">6</div>
<div style="left:1px;top:481px;width:20px;height:1px;background:#c8c8c8"></div>
<div class="t" style="left:-1px;width:19px;text-align:center;top:466px;font-size:11px;line-height:15px;color:#333">7</div>
<div style="left:1px;top:498px;width:20px;height:1px;background:#c8c8c8"></div>
<div class="t" style="left:-1px;width:19px;text-align:center;top:483px;font-size:11px;line-height:15px;color:#333">8</div>
<div style="left:1px;top:515px;width:20px;height:1px;background:#c8c8c8"></div>
<div class="t" style="left:-1px;width:19px;text-align:center;top:500px;font-size:11px;line-height:15px;color:#333">9</div>
<div style="left:1px;top:516px;width:19px;height:16px;background:#d2d2d2"></div>
<div style="left:1px;top:532px;width:20px;height:1px;background:#c8c8c8"></div>
<div class="t" style="left:-1px;width:19px;text-align:center;top:517px;font-size:11px;line-height:15px;color:#217346">10</div>
<div style="left:1px;top:549px;width:20px;height:1px;background:#c8c8c8"></div>
<div class="t" style="left:-1px;width:19px;text-align:center;top:534px;font-size:11px;line-height:15px;color:#333">11</div>
<div style="left:1px;top:566px;width:20px;height:1px;background:#c8c8c8"></div>
<div class="t" style="left:-1px;width:19px;text-align:center;top:551px;font-size:11px;line-height:15px;color:#333">12</div>
<div style="left:1px;top:583px;width:20px;height:1px;background:#c8c8c8"></div>
<div class="t" style="left:-1px;width:19px;text-align:center;top:568px;font-size:11px;line-height:15px;color:#333">13</div>
<div style="left:1px;top:600px;width:20px;height:1px;background:#c8c8c8"></div>
<div class="t" style="left:-1px;width:19px;text-align:center;top:585px;font-size:11px;line-height:15px;color:#333">14</div>
<div style="left:1px;top:617px;width:20px;height:1px;background:#c8c8c8"></div>
<div class="t" style="left:-1px;width:19px;text-align:center;top:602px;font-size:11px;line-height:15px;color:#333">15</div>
<div style="left:1px;top:634px;width:20px;height:1px;background:#c8c8c8"></div>
<div class="t" style="left:-1px;width:19px;text-align:center;top:619px;font-size:11px;line-height:15px;color:#333">16</div>
<div style="left:1px;top:651px;width:20px;height:1px;background:#c8c8c8"></div>
<div class="t" style="left:-1px;width:19px;text-align:center;top:636px;font-size:11px;line-height:15px;color:#333">17</div>
<div style="left:1px;top:668px;width:20px;height:1px;background:#c8c8c8"></div>
<div class="t" style="left:-1px;width:19px;text-align:center;top:653px;font-size:11px;line-height:15px;color:#333">18</div>
<div style="left:1px;top:685px;width:20px;height:1px;background:#c8c8c8"></div>
<div class="t" style="left:-1px;width:19px;text-align:center;top:670px;font-size:11px;line-height:15px;color:#333">19</div>
<div class="t" style="left:-1px;width:19px;text-align:center;top:687px;font-size:11px;line-height:15px;color:#333">20</div>
<div style="left:20px;top:187px;width:1px;height:511px;background:#b5b5b5"></div>
<div style="left:19px;top:516px;width:2px;height:17px;background:#217346"></div>
<div class="t" style="left:21px;top:204.5px;width:164px;font-family:'Liberation Serif', serif;font-size:12px;font-weight:bold;line-height:16px;color:#000;text-align:center">Thuộc tên CTMT, DA</div>
<div class="t" style="left:186px;top:204.5px;width:201px;font-family:'Liberation Serif', serif;font-size:12px;font-weight:bold;line-height:16px;color:#000;text-align:center">Tên nhóm Chương-Loại-Khoản (*)</div>
<div class="t" style="left:388px;top:204.5px;width:66px;font-family:'Liberation Serif', serif;font-size:12px;font-weight:bold;line-height:16px;color:#000;text-align:center">Chương (*)</div>
<div class="t" style="left:455px;top:204.5px;width:67px;font-family:'Liberation Serif', serif;font-size:12px;font-weight:bold;line-height:16px;color:#000;text-align:center">Khoản (*)</div>
<div class="t" style="left:523px;top:204.5px;width:72px;font-family:'Liberation Serif', serif;font-size:12px;font-weight:bold;line-height:16px;color:#000;text-align:center">Loại (*)</div>
<div class="t" style="left:596px;top:204.5px;width:90px;font-family:'Liberation Serif', serif;font-size:12px;font-weight:bold;line-height:16px;color:#000;text-align:center">Lĩnh vực</div>
<div class="t" style="left:687px;top:204.5px;width:96px;font-family:'Liberation Serif', serif;font-size:12px;font-weight:bold;line-height:16px;color:#000;text-align:center">Mã tính chất</div>
<div class="t" style="left:784px;top:204.5px;width:113px;font-family:'Liberation Serif', serif;font-size:12px;font-weight:bold;line-height:16px;color:#000;text-align:center">Tên tính chất</div>
<div class="t" style="left:898px;top:204.5px;width:111px;font-family:'Liberation Serif', serif;font-size:12px;font-weight:bold;line-height:16px;color:#000;text-align:center">Nguồn (*)</div>
<div class="t" style="left:1010px;top:204.5px;width:114px;font-family:'Liberation Serif', serif;font-size:12px;font-weight:bold;line-height:16px;color:#000;text-align:center">Tên nguồn</div>
<div class="t" style="left:1263px;top:204.5px;width:90px;font-family:'Liberation Serif', serif;font-size:12px;font-weight:bold;line-height:16px;color:#000;text-align:center">Số thực hiện</div>
<div class="t" style="left:1125px;top:188.5px;width:137px;font-family:'Liberation Serif', serif;font-size:12px;font-weight:bold;line-height:16px;color:#000;text-align:center">Thuộc Chi cân đối ngân<br>sách/ Chi từ nguồn bổ<br>sung có mục tiêu</div>
<div class="t" style="left:21px;top:243.0px;width:164px;font-family:'Liberation Serif', serif;font-size:12px;font-weight:bold;line-height:16px;color:#000;text-align:center">D</div>
<div class="t" style="left:186px;top:243.0px;width:201px;font-family:'Liberation Serif', serif;font-size:12px;font-weight:bold;line-height:16px;color:#000;text-align:center">E</div>
<div class="t" style="left:388px;top:243.0px;width:66px;font-family:'Liberation Serif', serif;font-size:12px;font-weight:bold;line-height:16px;color:#000;text-align:center">F</div>
<div class="t" style="left:455px;top:243.0px;width:67px;font-family:'Liberation Serif', serif;font-size:12px;font-weight:bold;line-height:16px;color:#000;text-align:center">G</div>
<div class="t" style="left:523px;top:243.0px;width:72px;font-family:'Liberation Serif', serif;font-size:12px;font-weight:bold;line-height:16px;color:#000;text-align:center">H</div>
<div class="t" style="left:596px;top:243.0px;width:90px;font-family:'Liberation Serif', serif;font-size:12px;font-weight:bold;line-height:16px;color:#000;text-align:center">I</div>
<div class="t" style="left:687px;top:243.0px;width:96px;font-family:'Liberation Serif', serif;font-size:12px;font-weight:bold;line-height:16px;color:#000;text-align:center">J</div>
<div class="t" style="left:784px;top:243.0px;width:113px;font-family:'Liberation Serif', serif;font-size:12px;font-weight:bold;line-height:16px;color:#000;text-align:center">K</div>
<div class="t" style="left:898px;top:243.0px;width:111px;font-family:'Liberation Serif', serif;font-size:12px;font-weight:bold;line-height:16px;color:#000;text-align:center">L</div>
<div class="t" style="left:1010px;top:243.0px;width:114px;font-family:'Liberation Serif', serif;font-size:12px;font-weight:bold;line-height:16px;color:#000;text-align:center">M</div>
<div class="t" style="left:1125px;top:243.0px;width:137px;font-family:'Liberation Serif', serif;font-size:12px;font-weight:bold;line-height:16px;color:#000;text-align:center">N</div>
<div class="t" style="left:1263px;top:243.0px;width:90px;font-family:'Liberation Serif', serif;font-size:12px;font-weight:bold;line-height:16px;color:#000;text-align:center">1</div>
<div class="t" style="left:23px;top:273.5px;font-family:'Liberation Serif', serif;font-size:12px;line-height:17px;white-space:nowrap;color:#000;width:161px;text-align:left">Chương trình Hỗ trợ đảm bảo<br>chất lượng giáo dục trường học</div>
<div class="t" style="left:188px;top:273.5px;font-family:'Liberation Serif', serif;font-size:12px;line-height:17px;white-space:nowrap;color:#000;width:198px;text-align:left">Giáo dục trung học phổ thông (Chương<br>422)</div>
<div class="t" style="left:390px;top:282.0px;font-family:'Liberation Serif', serif;font-size:12px;line-height:17px;white-space:nowrap;color:#000;width:63px;text-align:left">422</div>
<div class="t" style="left:457px;top:282.0px;font-family:'Liberation Serif', serif;font-size:12px;line-height:17px;white-space:nowrap;color:#000;width:64px;text-align:left">074</div>
<div class="t" style="left:525px;top:282.0px;font-family:'Liberation Serif', serif;font-size:12px;line-height:17px;white-space:nowrap;color:#000;width:69px;text-align:left">070</div>
<div class="t" style="left:598px;top:265.8px;font-family:'Liberation Serif', serif;font-size:12px;line-height:17px;white-space:nowrap;color:#000;width:87px;text-align:left">Sự nghiệp giáo<br>dục - đào tạo và<br>dạy nghề</div>
<div class="t" style="left:23px;top:323.5px;font-family:'Liberation Serif', serif;font-size:12px;line-height:17px;white-space:nowrap;color:#000;width:161px;text-align:left">Chương trình Hỗ trợ đảm bảo<br>chất lượng giáo dục trường học</div>
<div class="t" style="left:188px;top:323.5px;font-family:'Liberation Serif', serif;font-size:12px;line-height:17px;white-space:nowrap;color:#000;width:198px;text-align:left">Giáo dục trung học phổ thông (Chương<br>422)</div>
<div class="t" style="left:390px;top:332.0px;font-family:'Liberation Serif', serif;font-size:12px;line-height:17px;white-space:nowrap;color:#000;width:63px;text-align:left">422</div>
<div class="t" style="left:457px;top:332.0px;font-family:'Liberation Serif', serif;font-size:12px;line-height:17px;white-space:nowrap;color:#000;width:64px;text-align:left">074</div>
<div class="t" style="left:525px;top:332.0px;font-family:'Liberation Serif', serif;font-size:12px;line-height:17px;white-space:nowrap;color:#000;width:69px;text-align:left">070</div>
<div class="t" style="left:598px;top:315.8px;font-family:'Liberation Serif', serif;font-size:12px;line-height:17px;white-space:nowrap;color:#000;width:87px;text-align:left">Sự nghiệp giáo<br>dục - đào tạo và<br>dạy nghề</div>
<div class="t" style="left:23px;top:373.5px;font-family:'Liberation Serif', serif;font-size:12px;line-height:17px;white-space:nowrap;color:#000;width:161px;text-align:left">Chương trình Hỗ trợ đảm bảo<br>chất lượng giáo dục trường học</div>
<div class="t" style="left:188px;top:373.5px;font-family:'Liberation Serif', serif;font-size:12px;line-height:17px;white-space:nowrap;color:#000;width:198px;text-align:left">Giáo dục trung học phổ thông (Chương<br>422)</div>
<div class="t" style="left:390px;top:382.0px;font-family:'Liberation Serif', serif;font-size:12px;line-height:17px;white-space:nowrap;color:#000;width:63px;text-align:left">422</div>
<div class="t" style="left:457px;top:382.0px;font-family:'Liberation Serif', serif;font-size:12px;line-height:17px;white-space:nowrap;color:#000;width:64px;text-align:left">074</div>
<div class="t" style="left:525px;top:382.0px;font-family:'Liberation Serif', serif;font-size:12px;line-height:17px;white-space:nowrap;color:#000;width:69px;text-align:left">070</div>
<div class="t" style="left:598px;top:365.8px;font-family:'Liberation Serif', serif;font-size:12px;line-height:17px;white-space:nowrap;color:#000;width:87px;text-align:left">Sự nghiệp giáo<br>dục - đào tạo và<br>dạy nghề</div>
<div class="t" style="left:188px;top:423.5px;font-family:'Liberation Serif', serif;font-size:12px;line-height:17px;white-space:nowrap;color:#e00000;width:198px;text-align:left">Giáo dục trung học phổ thông (Chương<br>422)</div>
<div class="t" style="left:390px;top:432.0px;font-family:'Liberation Serif', serif;font-size:12px;line-height:17px;white-space:nowrap;color:#e00000;width:63px;text-align:left">422</div>
<div class="t" style="left:457px;top:432.0px;font-family:'Liberation Serif', serif;font-size:12px;line-height:17px;white-space:nowrap;color:#e00000;width:64px;text-align:left">074</div>
<div class="t" style="left:525px;top:432.0px;font-family:'Liberation Serif', serif;font-size:12px;line-height:17px;white-space:nowrap;color:#e00000;width:69px;text-align:left">070</div>
<div class="t" style="left:598px;top:415.8px;font-family:'Liberation Serif', serif;font-size:12px;line-height:17px;white-space:nowrap;color:#e00000;width:87px;text-align:left">Sự nghiệp giáo<br>dục - đào tạo và<br>dạy nghề</div>
<div class="t" style="left:689px;top:282.0px;font-family:'Liberation Serif', serif;font-size:12px;line-height:17px;white-space:nowrap;color:#000;width:93px;text-align:left">001</div>
<div class="t" style="left:786px;top:282.0px;font-family:'Liberation Serif', serif;font-size:12px;line-height:17px;white-space:nowrap;color:#000;width:110px;text-align:left;overflow:hidden;width:111px">Quỹ lương, phụ cấp và</div>
<div class="t" style="left:900px;top:282.0px;font-family:'Liberation Serif', serif;font-size:12px;line-height:17px;white-space:nowrap;color:#000;width:108px;text-align:left">12</div>
<div class="t" style="left:1012px;top:282.0px;font-family:'Liberation Serif', serif;font-size:12px;line-height:17px;white-space:nowrap;color:#000;width:300px;text-align:left">Kinh phí không giao tự chủ, không giao khoán</div>
<div class="t" style="left:1262px;top:298px;width:85px;text-align:right;font-family:'Liberation Serif', serif;font-size:12px;line-height:17px;white-space:nowrap;color:#000">100,000,000</div>
<div class="t" style="left:689px;top:332.0px;font-family:'Liberation Serif', serif;font-size:12px;line-height:17px;white-space:nowrap;color:#000;width:93px;text-align:left">002</div>
<div class="t" style="left:786px;top:332.0px;font-family:'Liberation Serif', serif;font-size:12px;line-height:17px;white-space:nowrap;color:#000;width:110px;text-align:left;overflow:hidden;width:111px">Chi thường xuyên theo</div>
<div class="t" style="left:900px;top:332.0px;font-family:'Liberation Serif', serif;font-size:12px;line-height:17px;white-space:nowrap;color:#000;width:108px;text-align:left">12</div>
<div class="t" style="left:1012px;top:332.0px;font-family:'Liberation Serif', serif;font-size:12px;line-height:17px;white-space:nowrap;color:#000;width:300px;text-align:left">Kinh phí không giao tự chủ, không giao khoán</div>
<div class="t" style="left:1262px;top:348px;width:85px;text-align:right;font-family:'Liberation Serif', serif;font-size:12px;line-height:17px;white-space:nowrap;color:#000">50,000,000</div>
<div class="t" style="left:689px;top:382.0px;font-family:'Liberation Serif', serif;font-size:12px;line-height:17px;white-space:nowrap;color:#000;width:93px;text-align:left">002</div>
<div class="t" style="left:786px;top:382.0px;font-family:'Liberation Serif', serif;font-size:12px;line-height:17px;white-space:nowrap;color:#000;width:110px;text-align:left;overflow:hidden;width:111px">Chi thường xuyên theo</div>
<div class="t" style="left:900px;top:382.0px;font-family:'Liberation Serif', serif;font-size:12px;line-height:17px;white-space:nowrap;color:#000;width:108px;text-align:left">13</div>
<div class="t" style="left:1012px;top:382.0px;font-family:'Liberation Serif', serif;font-size:12px;line-height:17px;white-space:nowrap;color:#000;width:300px;text-align:left">Kinh phí được giao tự chủ</div>
<div class="t" style="left:1262px;top:398px;width:85px;text-align:right;font-family:'Liberation Serif', serif;font-size:12px;line-height:17px;white-space:nowrap;color:#000">100,000,000</div>
<div class="t" style="left:689px;top:432.0px;font-family:'Liberation Serif', serif;font-size:12px;line-height:17px;white-space:nowrap;color:#e00000;width:93px;text-align:left">003</div>
<div class="t" style="left:786px;top:432.0px;font-family:'Liberation Serif', serif;font-size:12px;line-height:17px;white-space:nowrap;color:#e00000;width:110px;text-align:left;overflow:hidden;width:111px">Chi đặc thù ngoài định</div>
<div class="t" style="left:900px;top:432.0px;font-family:'Liberation Serif', serif;font-size:12px;line-height:17px;white-space:nowrap;color:#e00000;width:108px;text-align:left">13</div>
<div class="t" style="left:1012px;top:432.0px;font-family:'Liberation Serif', serif;font-size:12px;line-height:17px;white-space:nowrap;color:#e00000;width:300px;text-align:left">Kinh phí được giao tự chủ</div>
<div class="t" style="left:1262px;top:448px;width:85px;text-align:right;font-family:'Liberation Serif', serif;font-size:12px;line-height:17px;white-space:nowrap;color:#e00000">200,000,000</div>
<div class="t" style="left:1410px;top:203px;font-family:'Liberation Serif', serif;font-size:12.5px;font-weight:bold;color:#1f5fbf;text-decoration:underline;line-height:16px">Quay lại</div>
<div style="left:1462px;top:236px;width:53px;height:28px;background:#fff"></div>
<div class="t" style="left:1464px;top:235px;font-size:11px;font-weight:bold;color:#e02020;line-height:14px">Chi tiết<br>lỗi</div>
<div style="left:1462px;top:415px;width:53px;height:49px;background:#fff"></div>
<div class="t" style="left:1464px;top:450px;font-size:10.8px;color:#e02020;line-height:14px">Mã 0440 chưa có trên danh mục chương trình</div>
<svg style="position:absolute;left:1490px;top:470px;" width="40" height="56" viewBox="0 0 40 56"><path d="M11 50L27 13" stroke="#f03c3c" stroke-width="3.2" stroke-linecap="round"/><path d="M32 4L20 15l12 5z" fill="#f03c3c"/></svg>
<div style="left:1406px;top:514px;width:57px;height:20px;border:2px solid #21603a;box-sizing:border-box"></div>
<div style="left:1408px;top:516px;width:53px;height:16px;border:1px solid #fff;box-sizing:border-box"></div>
<div style="left:1459px;top:530px;width:5px;height:5px;background:#21603a;border:1px solid #fff"></div>
<div style="left:1688px;top:171px;width:13px;height:527px;background:#e6e6e6"></div>
<div style="left:1691px;top:174px;width:10px;height:14px;background:#fff;border:1px solid #c6c6c6;box-sizing:border-box"></div>
<svg style="position:absolute;left:1693px;top:179px;" width="7" height="4" viewBox="0 0 7 4"><path d="M0 4h7L3.5 0z" fill="#777"/></svg>
<div style="left:1691px;top:188px;width:10px;height:50px;background:#fff;border:1px solid #c6c6c6;box-sizing:border-box"></div>
<div style="left:1691px;top:684px;width:10px;height:14px;background:#fff;border:1px solid #c6c6c6;box-sizing:border-box"></div>
<svg style="position:absolute;left:1694px;top:689px;" width="7" height="4" viewBox="0 0 7 4"><path d="M0 0h7L3.5 4z" fill="#777"/></svg>
<div style="left:1px;top:698px;width:1700px;height:28px;background:#e6e6e6"></div>
<div style="left:1px;top:698px;width:1687px;height:1px;background:#9e9e9e"></div>
<svg style="position:absolute;left:24px;top:708px;" width="5" height="8" viewBox="0 0 5 8"><path d="M5 0v8L0 4z" fill="#217346"/></svg>
<svg style="position:absolute;left:53px;top:708px;" width="5" height="8" viewBox="0 0 5 8"><path d="M0 0v8l5-4z" fill="#c0c0c0"/></svg>
<div class="t" style="left:78px;top:706px;font-size:13px;color:#333;font-weight:bold;line-height:13px">...</div>
<div style="left:98px;top:702px;width:1px;height:20px;background:#bdbdbd"></div>
<div style="left:101px;top:701px;width:149px;height:22px;background:#43cdfa"></div>
<div class="t" style="left:101px;top:704.5px;width:149px;text-align:center;font-size:12.5px;line-height:15px;color:#1a1a1a">SoDuToan_ChiDauTu</div>
<div style="left:255px;top:701px;width:159px;height:22px;background:#ff0000"></div>
<div class="t" style="left:255px;top:704.5px;width:159px;text-align:center;font-size:12.5px;line-height:15px;color:#fff">SoThucHien_ChiDauTu</div>
<div style="left:419px;top:701px;width:195px;height:22px;background:#43cdfa"></div>
<div class="t" style="left:419px;top:704.5px;width:195px;text-align:center;font-size:12.5px;line-height:15px;color:#1a1a1a">SoDuToan_ChiThuongXuyen</div>
<div style="left:619px;top:701px;width:205px;height:22px;background:#ff0000"></div>
<div class="t" style="left:619px;top:704.5px;width:205px;text-align:center;font-size:12.5px;line-height:15px;color:#fff">SoThucHien_ChiThuongXuyen</div>
<div style="left:829px;top:701px;width:144px;height:22px;background:#43cdfa"></div>
<div class="t" style="left:829px;top:704.5px;width:144px;text-align:center;font-size:12.5px;line-height:15px;color:#1a1a1a">SoDuToan_ChiCTMT</div>
<div style="left:252px;top:702px;width:1px;height:20px;background:#bdbdbd"></div>
<div style="left:416px;top:702px;width:1px;height:20px;background:#bdbdbd"></div>
<div style="left:616px;top:702px;width:1px;height:20px;background:#bdbdbd"></div>
<div style="left:826px;top:702px;width:1px;height:20px;background:#bdbdbd"></div>
<div style="left:975px;top:698px;width:159px;height:24px;background:#fff;border-left:1px solid #bdbdbd;border-right:1px solid #bdbdbd;box-sizing:border-box"></div>
<div style="left:978px;top:703px;width:153px;height:16px;background:linear-gradient(#fdf0f0,#fbd3d3 55%,#f6a9a9)"></div>
<div style="left:975px;top:721px;width:159px;height:2px;background:#22643d"></div>
<div class="t" style="left:975px;top:704.5px;width:159px;text-align:center;font-size:12.5px;font-weight:bold;line-height:15px;color:#2a6640">SoThucHien_ChiCTMT</div>
<svg style="position:absolute;left:1166px;top:704px;" width="17" height="17" viewBox="0 0 17 17"><circle cx="8.5" cy="8.5" r="7.5" fill="none" stroke="#c4c4c4" stroke-width="1.2"/><path d="M8.5 4.5v8M4.5 8.5h8" stroke="#c4c4c4" stroke-width="1.4"/></svg>
<div style="left:1242px;top:707px;width:2px;height:2px;background:#9a9a9a"></div>
<div style="left:1242px;top:711px;width:2px;height:2px;background:#9a9a9a"></div>
<div style="left:1242px;top:715px;width:2px;height:2px;background:#9a9a9a"></div>
<div style="left:1259px;top:705px;width:15px;height:15px;background:#fff;border:1px solid #b5b5b5;box-sizing:border-box"></div>
<svg style="position:absolute;left:1263px;top:708px;" width="5" height="8" viewBox="0 0 5 8"><path d="M5 0v8L0 4z" fill="#777"/></svg>
<div style="left:1274px;top:705px;width:57px;height:15px;background:#dadada"></div>
<div style="left:1331px;top:705px;width:343px;height:15px;background:#fff;border:1px solid #b5b5b5;box-sizing:border-box"></div>
<div style="left:1673px;top:705px;width:15px;height:15px;background:#fff;border:1px solid #b5b5b5;box-sizing:border-box"></div>
<svg style="position:absolute;left:1678px;top:708px;" width="5" height="8" viewBox="0 0 5 8"><path d="M0 0v8l5-4z" fill="#777"/></svg>
</body></html>
